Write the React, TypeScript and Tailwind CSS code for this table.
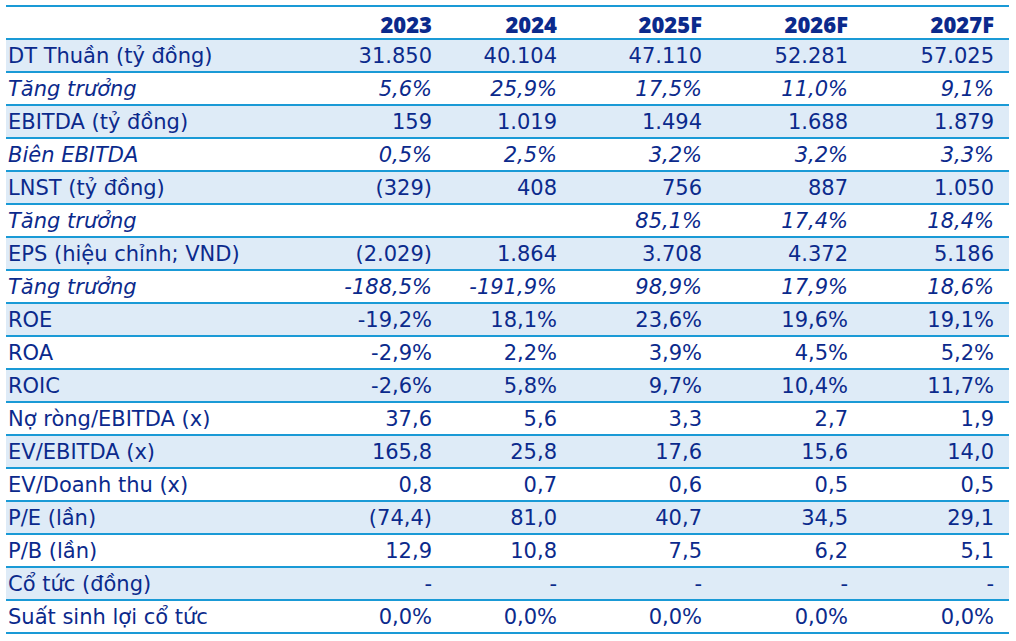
import React from "react";

type Row = {
  label: string;
  values: string[];
  italic?: boolean;
};

const years = ["2023", "2024", "2025F", "2026F", "2027F"];

const rows: Row[] = [
  { label: "DT Thuần (tỷ đồng)", values: ["31.850", "40.104", "47.110", "52.281", "57.025"] },
  { label: "Tăng trưởng", values: ["5,6%", "25,9%", "17,5%", "11,0%", "9,1%"], italic: true },
  { label: "EBITDA (tỷ đồng)", values: ["159", "1.019", "1.494", "1.688", "1.879"] },
  { label: "Biên EBITDA", values: ["0,5%", "2,5%", "3,2%", "3,2%", "3,3%"], italic: true },
  { label: "LNST (tỷ đồng)", values: ["(329)", "408", "756", "887", "1.050"] },
  { label: "Tăng trưởng", values: ["", "", "85,1%", "17,4%", "18,4%"], italic: true },
  { label: "EPS (hiệu chỉnh; VND)", values: ["(2.029)", "1.864", "3.708", "4.372", "5.186"] },
  { label: "Tăng trưởng", values: ["-188,5%", "-191,9%", "98,9%", "17,9%", "18,6%"], italic: true },
  { label: "ROE", values: ["-19,2%", "18,1%", "23,6%", "19,6%", "19,1%"] },
  { label: "ROA", values: ["-2,9%", "2,2%", "3,9%", "4,5%", "5,2%"] },
  { label: "ROIC", values: ["-2,6%", "5,8%", "9,7%", "10,4%", "11,7%"] },
  { label: "Nợ ròng/EBITDA (x)", values: ["37,6", "5,6", "3,3", "2,7", "1,9"] },
  { label: "EV/EBITDA (x)", values: ["165,8", "25,8", "17,6", "15,6", "14,0"] },
  { label: "EV/Doanh thu (x)", values: ["0,8", "0,7", "0,6", "0,5", "0,5"] },
  { label: "P/E (lần)", values: ["(74,4)", "81,0", "40,7", "34,5", "29,1"] },
  { label: "P/B (lần)", values: ["12,9", "10,8", "7,5", "6,2", "5,1"] },
  { label: "Cổ tức (đồng)", values: ["-", "-", "-", "-", "-"] },
  { label: "Suất sinh lợi cổ tức", values: ["0,0%", "0,0%", "0,0%", "0,0%", "0,0%"] },
];

// label, 2023, 2024, 2025F, 2026F, 2027F
const colWidths = ["w-[316px]", "w-[125px]", "w-[125px]", "w-[145px]", "w-[146px]", "w-[146px]"];

export default function App() {
  return (
    <div className="min-h-screen bg-white pt-[5px] pl-[6px] font-['DejaVu_Sans',sans-serif] text-[#0b2a8c]">
      <div className="w-[1003px] border-t-2 border-[#1a9ad6]">
        {/* header */}
        <div className="flex h-[33px] items-center border-b-2 border-[#1a9ad6] pt-[3px] font-['Open_Sans',sans-serif] text-[22px] font-extrabold">
          <div className={`${colWidths[0]} shrink-0`} />
          {years.map((y, i) => (
            <div key={y} className={`${colWidths[i + 1]} shrink-0 pr-[15px] text-right`}>
              {y}
            </div>
          ))}
        </div>

        {rows.map((row, idx) => (
          <div
            key={idx}
            className={`flex h-[33px] items-center border-b-2 border-[#1a9ad6] pt-[2px] text-[21px] ${
              idx % 2 === 0 ? "bg-[#deebf7]" : "bg-white"
            } ${row.italic ? "italic" : ""}`}
          >
            <div className={`${colWidths[0]} shrink-0 pl-[2px] whitespace-nowrap`}>{row.label}</div>
            {row.values.map((v, i) => (
              <div key={i} className={`${colWidths[i + 1]} shrink-0 pr-[15px] text-right whitespace-nowrap`}>
                {v}
              </div>
            ))}
          </div>
        ))}
      </div>
    </div>
  );
}
